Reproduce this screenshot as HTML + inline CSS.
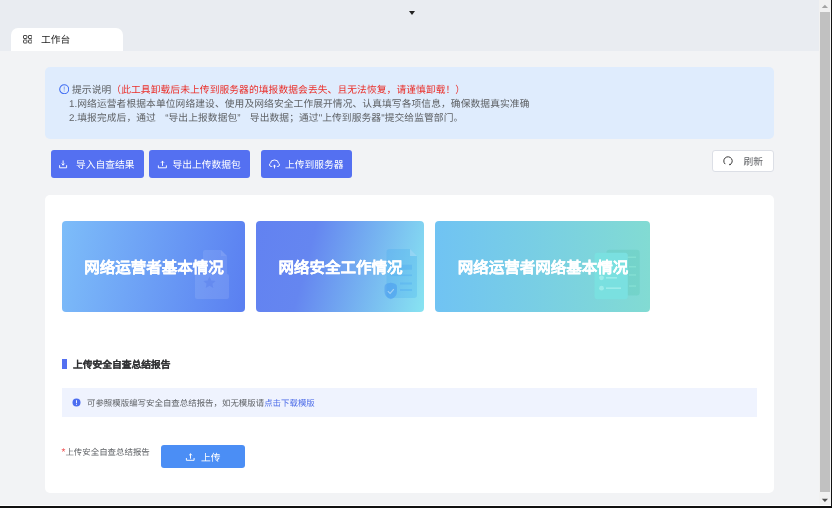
<!DOCTYPE html>
<html lang="zh-CN"><head><meta charset="utf-8">
<style>
*{box-sizing:border-box;margin:0;padding:0}
html,body{text-rendering:geometricPrecision;will-change:transform;width:832px;height:508px;overflow:hidden;background:#f2f3f5;font-family:"Liberation Sans",sans-serif;color:#606266}
.abs{position:absolute}
#hdr{position:absolute;left:0;top:0;width:819px;height:50.5px;background:#e9ecf1}
#caret{position:absolute;left:408.6px;top:11px;width:0;height:0;border-left:3.7px solid transparent;border-right:3.7px solid transparent;border-top:4.5px solid #222}
#tab{position:absolute;left:11px;top:28px;width:112px;height:22.5px;background:#fff;border-radius:7px 7px 0 0}
#tab .t{position:absolute;left:30px;top:6.3px;font-size:9.75px;line-height:14px;color:#222;white-space:nowrap}
#main{position:absolute;left:0;top:50.5px;width:819px;height:454.5px;background:#f2f3f5}
#info{position:absolute;left:45px;top:67px;width:729px;height:72px;background:#dfecfd;border-radius:5px}
.ln{position:absolute;font-size:9.75px;line-height:14px;white-space:nowrap;color:#5f6266}
.red{color:#ea2f2a}
.qo{display:inline-block;width:9.75px;text-align:right}
.qc{display:inline-block;width:9.75px;text-align:left}
.btn{position:absolute;top:150px;height:28px;background:#5470f1;border-radius:3px;color:#fff;font-size:9.75px;line-height:28px;white-space:nowrap}
.btn svg{position:absolute;top:10px}
.btn span{position:absolute;top:2px}
#refresh{position:absolute;left:711.5px;top:150px;width:62px;height:21.5px;background:#fff;border:0.65px solid #dcdfe6;border-radius:3px}
#panel{position:absolute;left:45px;top:195px;width:729px;height:298px;background:#fff;border-radius:5px}
.card{position:absolute;top:221px;height:91px;border-radius:4px;overflow:hidden}
.card .tt{position:absolute;left:1px;right:0;top:2px;bottom:0;-webkit-text-stroke:0.15px #fff;text-align:center;color:#fff;font-size:15.5px;font-weight:bold;line-height:91px;white-space:nowrap}
#sb{position:absolute;left:819px;top:0;width:12px;height:506px;background:#f1f1f1}
#thumb{position:absolute;left:820px;top:12px;width:10px;height:480px;background:#c1c1c1}
</style></head>
<body>
<div id="hdr"></div>
<div id="caret"></div>
<div id="tab">
  <svg class="abs" style="left:11.9px;top:7.2px" width="9.5" height="8.5" viewBox="0 0 9.5 8.5"><g fill="none" stroke="#4a4a4a" stroke-width="1"><rect x="0.5" y="0.5" width="3.4" height="3" rx="0.5"/><rect x="5.5" y="0.5" width="3.4" height="3" rx="0.5"/><rect x="0.5" y="5" width="3.4" height="3" rx="0.5"/><rect x="5.5" y="5" width="3.4" height="3" rx="0.5"/></g></svg>
  <div class="t">工作台</div>
</div>
<div id="main"></div>
<div id="info"></div>
<svg class="abs" style="left:58.8px;top:83.8px" width="10.5" height="10.5" viewBox="0 0 10.5 10.5"><circle cx="5.2" cy="5.2" r="4.5" fill="none" stroke="#3f6cf2" stroke-width="1.05"/><rect x="4.8" y="2.5" width="0.8" height="3.2" fill="#6a8cf4"/><rect x="4.8" y="6.5" width="0.8" height="1" fill="#6a8cf4"/></svg>
<div class="ln" style="left:72px;top:83.5px;letter-spacing:0.08px">提示说明<span class="red">（此工具卸载后未上传到服务器的填报数据会丢失、且无法恢复，请谨慎卸载！）</span></div>
<div class="ln" style="left:69px;top:97.5px;letter-spacing:0.08px">1.网络运营者根据本单位网络建设、使用及网络安全工作展开情况、认真填写各项信息，确保数据真实准确</div>
<div class="ln" style="left:69px;top:111.5px;letter-spacing:0.08px">2.填报完成后，通过 <span class="qo">“</span>导出上报数据包<span class="qc">”</span> 导出数据；通过"上传到服务器"提交给监管部门。</div>

<div class="btn" style="left:51px;width:92.5px">
  <span style="left:25px">导入自查结果</span>
</div>
<div class="btn" style="left:149px;width:100.5px">
  <span style="left:23.5px">导出上传数据包</span>
</div>
<div class="btn" style="left:261px;width:90.5px">
  <span style="left:24px">上传到服务器</span>
</div>
<div id="refresh">
  <svg class="abs" style="left:10.3px;top:5.1px" width="10" height="10" viewBox="0 0 10 10"><path d="M2.19 8.12A4.2 4.2 0 1 1 6.91 8.74" fill="none" stroke="#3a3a3a" stroke-width="1"/><circle cx="6.9" cy="8.6" r="0.75" fill="#333"/></svg>
  <span class="abs" style="left:31px;top:5px;font-size:9.75px;line-height:14px;color:#606266">刷新</span>
</div>

<div id="panel"></div>
<div class="card" style="left:62px;width:183px;background:linear-gradient(100deg,#7dbdf9 0%,#5a7ff1 100%)"><svg class="abs" style="left:0;top:0" width="183" height="91" viewBox="0 0 183 91">
<path d="M141 31Q141 29 143 29H159L165 35V53H141Z" fill="#fff" fill-opacity="0.09"/>
<path d="M159 29V35H165Z" fill="#fff" fill-opacity="0.08"/>
<rect x="133" y="53" width="34" height="25" rx="2" fill="#fff" fill-opacity="0.1"/>
<path d="M147.5 55.6L149.3 59.5L153.6 60L150.4 62.8L151.3 67L147.5 64.8L143.7 67L144.6 62.8L141.4 60L145.7 59.5Z" fill="#4a70e8" fill-opacity="0.3"/>
</svg><div class="tt">网络运营者基本情况</div></div>
<div class="card" style="left:256px;width:168px;background:linear-gradient(105deg,#6282f1 0%,#6586f0 32%,#88e4f1 100%)"><svg class="abs" style="left:0;top:0" width="168" height="91" viewBox="0 0 168 91">
<path d="M133.5 28H154L161 35V74Q161 77 158 77H133.5Q130.5 77 130.5 74V31Q130.5 28 133.5 28Z" fill="#3aa8f0" fill-opacity="0.24"/>
<path d="M154 28V35H161Z" fill="#fff" fill-opacity="0.25"/>
<rect x="134.7" y="43.8" width="21.3" height="4.9" fill="#3a9af0" fill-opacity="0.25"/>
<rect x="134.7" y="53.5" width="21.3" height="1.6" fill="#3a9af0" fill-opacity="0.25"/>
<rect x="144" y="61.5" width="12" height="2" fill="#3a9af0" fill-opacity="0.25"/>
<rect x="144" y="68" width="12" height="2" fill="#3a9af0" fill-opacity="0.25"/>
<path d="M134.75 61.8Q141 62.3 141 66V70.5Q141 76.3 134.75 78.3Q128.5 76.3 128.5 70.5V66Q128.5 62.3 134.75 61.8Z" fill="#3a8cf0" fill-opacity="0.4"/>
<path d="M131.8 70.2L134.1 72.4L137.8 68.2" fill="none" stroke="#fff" stroke-opacity="0.45" stroke-width="1.1"/>
</svg><div class="tt">网络安全工作情况</div></div>
<div class="card" style="left:435px;width:215px;background:linear-gradient(90deg,#70c3f3 0%,#82dbd3 100%)"><svg class="abs" style="left:0;top:0" width="215" height="91" viewBox="0 0 215 91">
<rect x="171.4" y="28.8" width="33.3" height="45.8" rx="3" fill="#5cc9b8" fill-opacity="0.35"/>
<rect x="192" y="35.5" width="9" height="1.5" fill="#8ee8d8" fill-opacity="0.6"/>
<rect x="194" y="45" width="7" height="1.5" fill="#8ee8d8" fill-opacity="0.6"/>
<rect x="194" y="53.2" width="7" height="1.5" fill="#8ee8d8" fill-opacity="0.6"/>
<rect x="194" y="64.3" width="7" height="1.5" fill="#8ee8d8" fill-opacity="0.6"/>
<rect x="159.6" y="31.7" width="33.2" height="46.6" rx="3" fill="#7ae0e0"/>
<circle cx="166.5" cy="56.8" r="2.4" fill="#a8f0ee" fill-opacity="0.75"/>
<circle cx="166.5" cy="67.2" r="2.4" fill="#a8f0ee" fill-opacity="0.75"/>
<rect x="171" y="56" width="11" height="1.6" fill="#a8f0ee" fill-opacity="0.75"/>
<rect x="171" y="66.4" width="15" height="1.6" fill="#a8f0ee" fill-opacity="0.75"/>
</svg><div class="tt">网络运营者网络基本情况</div></div>

<div class="abs" style="left:62px;top:359px;width:4.5px;height:10px;background:#5470f1"></div>
<div class="ln" style="left:73px;top:359px;font-weight:bold;color:#303133;-webkit-text-stroke:0.1px #303133">上传安全自查总结报告</div>
<div class="abs" style="left:62px;top:388px;width:695px;height:29px;background:#eff3fe"></div>
<svg class="abs" style="left:72px;top:398px" width="9" height="9" viewBox="0 0 9 9"><circle cx="4.5" cy="4.5" r="4" fill="#4c6ef0"/><rect x="4.05" y="2.2" width="0.9" height="3" fill="#fff"/><rect x="4.05" y="5.9" width="0.9" height="0.9" fill="#fff"/></svg>
<div class="ln" style="left:87px;top:396px;font-size:8.45px">可参照模版编写安全自查总结报告，如无模版请<span style="color:#4f6ee8">点击下载模版</span></div>

<div class="ln" style="left:61.5px;top:445px;font-size:8.45px"><span class="red" style="font-size:10px;position:relative;top:0px;color:#f05050">*</span>上传安全自查总结报告</div>
<div class="abs" style="left:161px;top:445px;width:84px;height:22.5px;background:#4b8ef5;border-radius:3px"></div>
<div class="ln" style="left:201px;top:452px;color:#fff">上传</div>

<svg class="abs" style="left:0;top:0" width="832" height="508" viewBox="0 0 832 508"><g fill="none" stroke="#fff" stroke-width="0.95" stroke-linecap="round" stroke-linejoin="round">
<path d="M63.1 160.8V165M61.9 163.9L63.1 165.1L64.3 163.9M59.6 165.6V167.8H66.6V165.6"/>
<path d="M162.5 161.3V165.5M161.3 162.4L162.5 161.2L163.7 162.4M158.4 165.8V167.8H166.4V165.8"/>
<path d="M271.4 166.5H270.9A1.8 1.8 0 0 1 270.6 163.1A3.9 3.1 0 0 1 278.4 163.1A1.8 1.8 0 0 1 278.1 166.5H277.6M274.5 165.2V168M273.5 166.2L274.5 165.1L275.5 166.2"/>
<path d="M190.5 454V458.3M189.4 455L190.5 453.9L191.6 455M186.4 458.4V460.3H194.1V458.4"/>
</g></svg>
<div id="sb"></div>
<div id="thumb"></div>
<svg class="abs" style="left:821px;top:4px" width="8" height="5" viewBox="0 0 8 5"><path d="M0.8 4H7L3.9 0.8Z" fill="#a3a3a3"/></svg>
<svg class="abs" style="left:821px;top:498px" width="8" height="5" viewBox="0 0 8 5"><path d="M0.8 0.8H7L3.9 4Z" fill="#505050"/></svg>
<div class="abs" style="left:0;top:505px;width:832px;height:1px;background:#fff"></div>
<div class="abs" style="left:0;top:506px;width:832px;height:2px;background:#111"></div>
<div class="abs" style="left:831px;top:0;width:1px;height:508px;background:#111"></div>
</body></html>
